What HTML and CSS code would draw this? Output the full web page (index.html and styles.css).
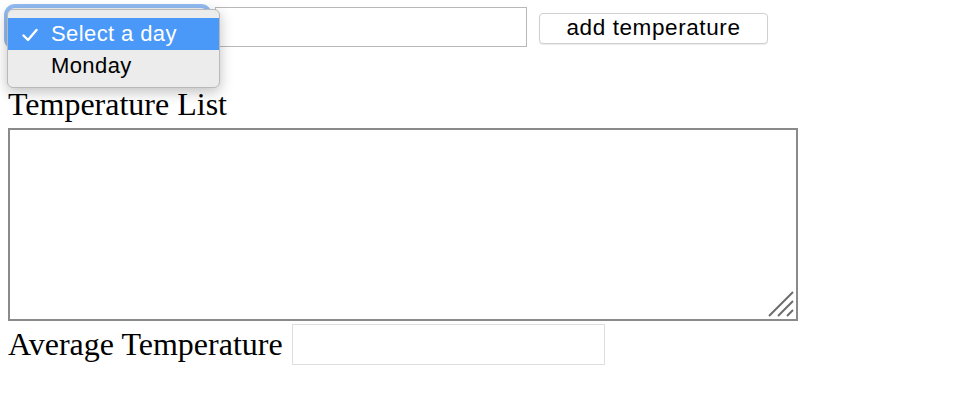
FILE: index.html
```html
<!DOCTYPE html>
<html>
<head>
<meta charset="utf-8">
<link rel="stylesheet" href="styles.css">
</head>
<body>
<div class="page">
  <div class="top-row">
    <div class="day-select"></div>
    <input class="temp-input" type="text">
    <button class="add-btn">add temperature</button>
  </div>
  <div class="title">Temperature List</div>
  <div class="list-wrap">
    <textarea class="temp-list"></textarea>
    <svg class="resizer" width="28" height="28" viewBox="0 0 28 28">
      <line x1="2" y1="26" x2="26" y2="2" />
      <line x1="11" y1="26" x2="26" y2="11" />
      <line x1="20" y1="26" x2="26" y2="20" />
    </svg>
  </div>
  <div class="avg-row">
    <span class="avg-label">Average Temperature</span>
    <input class="avg-input" type="text">
  </div>
  <div class="menu">
    <div class="menu-item selected">
      <svg class="check" width="16" height="14" viewBox="0 0 16 14"><path d="M1.5 7.5 L6 12 L14.5 2" /></svg>
      <span>Select a day</span>
    </div>
    <div class="menu-item"><span>Monday</span></div>
  </div>
</div>
</body>
</html>
```

FILE: styles.css
```css
html, body {
  margin: 0;
  background: #fff;
}
.page {
  position: relative;
  padding: 7px 0 0 8px;
  font-family: "Liberation Serif", "Times New Roman", serif;
  color: #000;
}
.top-row {
  display: flex;
  align-items: flex-start;
  height: 40px;
}
.day-select {
  width: 200px;
  height: 38px;
  margin-top: 1px;
  border-radius: 7px;
  background: #f4f4f4;
  box-shadow: 0 0 0 4px rgba(110, 165, 240, 0.75);
}
.temp-input {
  box-sizing: border-box;
  width: 312px;
  height: 40px;
  margin: 0 0 0 7px;
  border: 1px solid #b8b8b8;
  padding: 0;
  outline: none;
}
.add-btn {
  box-sizing: border-box;
  width: 229px;
  height: 31px;
  margin: 6px 0 0 12px;
  border: 1px solid #d0d0d0;
  border-radius: 4px;
  background: #fff;
  box-shadow: 0 1px 1px rgba(0,0,0,0.08);
  font-family: "Liberation Sans", Arial, sans-serif;
  font-size: 22.5px;
  letter-spacing: 0.6px;
  color: #000;
  padding: 0 0 2px;
  line-height: 28px;
}
.title {
  font-size: 32px;
  line-height: 36px;
  margin-top: 39px;
  height: 42px;
}
.list-wrap {
  position: relative;
  width: 790px;
  height: 193px;
}
.temp-list {
  display: block;
  box-sizing: border-box;
  width: 790px;
  height: 193px;
  margin: 0;
  border: 2px solid #8a8a8a;
  resize: none;
  outline: none;
}
.resizer {
  position: absolute;
  right: 3px;
  bottom: 3px;
}
.resizer line {
  stroke: #6b6b6b;
  stroke-width: 2;
}
.avg-row {
  display: flex;
  align-items: flex-start;
  margin-top: 3px;
}
.avg-label {
  font-size: 32px;
  line-height: 36px;
  margin-top: 2px;
}
.avg-input {
  box-sizing: border-box;
  width: 313px;
  height: 41px;
  margin: 0 0 0 9px;
  border: 1px solid #dedede;
  padding: 0;
  outline: none;
}
.menu {
  position: absolute;
  left: 7px;
  top: 9px;
  width: 213px;
  box-sizing: border-box;
  padding: 8px 0 5px;
  background: #ececec;
  border: 1px solid #b9b9b9;
  border-radius: 6px;
  box-shadow: 0 4px 14px rgba(0,0,0,0.25);
  font-family: "Liberation Sans", Arial, sans-serif;
  font-size: 22px;
  letter-spacing: 0.4px;
}
.menu-item {
  position: relative;
  height: 32px;
  line-height: 31px;
  padding-left: 43px;
  color: #000;
}
.menu-item.selected {
  background: #4a98f7;
  color: #fff;
}
.check {
  position: absolute;
  left: 14px;
  top: 10px;
}
.check path {
  fill: none;
  stroke: #fff;
  stroke-width: 2.4;
  stroke-linecap: round;
  stroke-linejoin: round;
}
```
